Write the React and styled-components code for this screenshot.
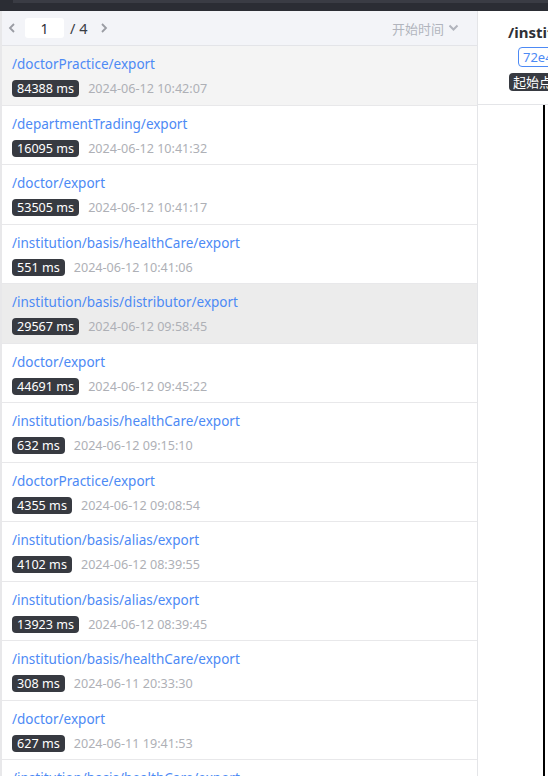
import React from 'react';
import styled, { createGlobalStyle } from 'styled-components';

const GlobalStyle = createGlobalStyle`
  html, body {
    margin: 0;
    padding: 0;
    background: #fff;
  }
  body {
    font-family: "Noto Sans", "Noto Sans CJK SC", sans-serif;
  }
  * {
    box-sizing: border-box;
  }
`;

const Page = styled.div`
  width: 548px;
  height: 776px;
  display: flex;
  flex-direction: column;
  overflow: hidden;
`;

const TopBar = styled.div`
  height: 11px;
  flex-shrink: 0;
  background: #2b2d34;
  padding-left: 13px;
`;

const TopStrip = styled.div`
  height: 3px;
  background: #3a3c44;
`;

const Main = styled.div`
  flex: 1;
  display: flex;
  min-height: 0;
`;

const LeftPanel = styled.div`
  width: 478px;
  flex-shrink: 0;
  display: flex;
  flex-direction: column;
  border-left: 2px solid #e8e8ea;
  border-right: 1px solid #e4e5e8;
  overflow: hidden;
`;

const Toolbar = styled.div`
  height: 35px;
  flex-shrink: 0;
  display: flex;
  align-items: center;
  background: #f3f4f8;
  border-bottom: 1px solid #e3e4e8;
  padding: 0 18px 0 2px;
  color: #3a3d44;
  font-size: 14px;
`;

const Arrow = styled.span`
  width: 16px;
  display: flex;
  justify-content: center;
  color: #9a9ca3;
`;

const PageInput = styled.div`
  width: 39px;
  height: 20px;
  margin-left: 5px;
  background: #fff;
  border-radius: 3px;
  display: flex;
  align-items: center;
  justify-content: center;
  color: #2d2f36;
  font-size: 14px;
`;

const Total = styled.span`
  margin: 0 9px 0 6px;
  color: #3a3d44;
  font-size: 14.5px;
`;

const SortButton = styled.div`
  margin-left: auto;
  display: flex;
  align-items: center;
  gap: 4px;
  color: #b1b4bd;
  font-size: 13px;
`;

const List = styled.div`
  flex: 1;
`;

const Item = styled.div`
  height: 59.5px;
  padding: 9px 0 0 10px;
  border-bottom: 1px solid #e8e8ea;
  background: ${(p) => p.bg || '#fff'};
  display: flex;
  flex-direction: column;
  gap: 6px;
`;

const Path = styled.div`
  color: #4d8af5;
  font-size: 13.5px;
  line-height: 19px;
  white-space: nowrap;
`;

const Meta = styled.div`
  display: flex;
  align-items: center;
  gap: 9px;
`;

const Badge = styled.span`
  height: 17px;
  padding: 0 5px;
  border-radius: 4px;
  background: #373a41;
  color: #fff;
  font-size: 12.6px;
  line-height: 17px;
`;

const Time = styled.span`
  color: #aeb0b6;
  font-size: 12.6px;
`;

const RightPanel = styled.div`
  flex: 1;
  min-width: 0;
  display: flex;
  flex-direction: column;
  overflow: hidden;
`;

const Header = styled.div`
  height: 94px;
  flex-shrink: 0;
  border-bottom: 1px solid #e4e5e8;
  padding: 11px 0 0 30px;
  display: flex;
  flex-direction: column;
  align-items: flex-start;
  white-space: nowrap;
`;

const Title = styled.div`
  font-size: 15px;
  font-weight: 700;
  color: #2e3036;
  line-height: 20px;
`;

const IdTag = styled.span`
  margin: 5px 0 0 10px;
  height: 20px;
  padding: 0 4px;
  border: 1px solid #4d8af5;
  border-radius: 4px;
  color: #4d8af5;
  font-size: 13px;
  line-height: 18px;
`;

const DarkTag = styled.span`
  margin: 6px 0 0 1px;
  height: 18px;
  padding: 0 4px;
  border-radius: 4px;
  background: #373a41;
  color: #fff;
  font-size: 13px;
  line-height: 18px;
`;

const Body = styled.div`
  flex: 1;
  display: flex;
  justify-content: flex-end;
  padding-right: 3px;
`;

const Divider = styled.div`
  width: 2px;
  background: #000;
`;

const Chevron = ({ dir }) => (
  <svg width="8" height="10" viewBox="0 0 8 10">
    <path
      d={dir === 'left' ? 'M6 1 L2 5 L6 9' : 'M2 1 L6 5 L2 9'}
      fill="none"
      stroke="currentColor"
      strokeWidth="1.8"
    />
  </svg>
);

const Down = () => (
  <svg width="11" height="8" viewBox="0 0 11 8">
    <path d="M1.5 1.5 L5.5 5.5 L9.5 1.5" fill="none" stroke="currentColor" strokeWidth="2" />
  </svg>
);

const rows = [
  ['/doctorPractice/export', 84388, '2024-06-12 10:42:07', '#f4f4f4'],
  ['/departmentTrading/export', 16095, '2024-06-12 10:41:32'],
  ['/doctor/export', 53505, '2024-06-12 10:41:17'],
  ['/institution/basis/healthCare/export', 551, '2024-06-12 10:41:06'],
  ['/institution/basis/distributor/export', 29567, '2024-06-12 09:58:45', '#ececec'],
  ['/doctor/export', 44691, '2024-06-12 09:45:22'],
  ['/institution/basis/healthCare/export', 632, '2024-06-12 09:15:10'],
  ['/doctorPractice/export', 4355, '2024-06-12 09:08:54'],
  ['/institution/basis/alias/export', 4102, '2024-06-12 08:39:55'],
  ['/institution/basis/alias/export', 13923, '2024-06-12 08:39:45'],
  ['/institution/basis/healthCare/export', 308, '2024-06-11 20:33:30'],
  ['/doctor/export', 627, '2024-06-11 19:41:53'],
  ['/institution/basis/healthCare/export', 1204, '2024-06-11 19:30:12'],
];

const App = () => {
  return (
    <>
      <GlobalStyle />
      <Page>
        <TopBar>
          <TopStrip />
        </TopBar>
        <Main>
          <LeftPanel>
            <Toolbar>
              <Arrow>
                <Chevron dir="left" />
              </Arrow>
              <PageInput>1</PageInput>
              <Total>/ 4</Total>
              <Arrow>
                <Chevron dir="right" />
              </Arrow>
              <SortButton>
                开始时间
                <Down />
              </SortButton>
            </Toolbar>
            <List>
              {rows.map(([path, ms, time, bg], i) => (
                <Item key={i} bg={bg}>
                  <Path>{path}</Path>
                  <Meta>
                    <Badge>{ms} ms</Badge>
                    <Time>{time}</Time>
                  </Meta>
                </Item>
              ))}
            </List>
          </LeftPanel>
          <RightPanel>
            <Header>
              <Title>/institution/basis/distributor/export</Title>
              <IdTag>72e4a1c9</IdTag>
              <DarkTag>起始点</DarkTag>
            </Header>
            <Body>
              <Divider />
            </Body>
          </RightPanel>
        </Main>
      </Page>
    </>
  );
};

export default App;
